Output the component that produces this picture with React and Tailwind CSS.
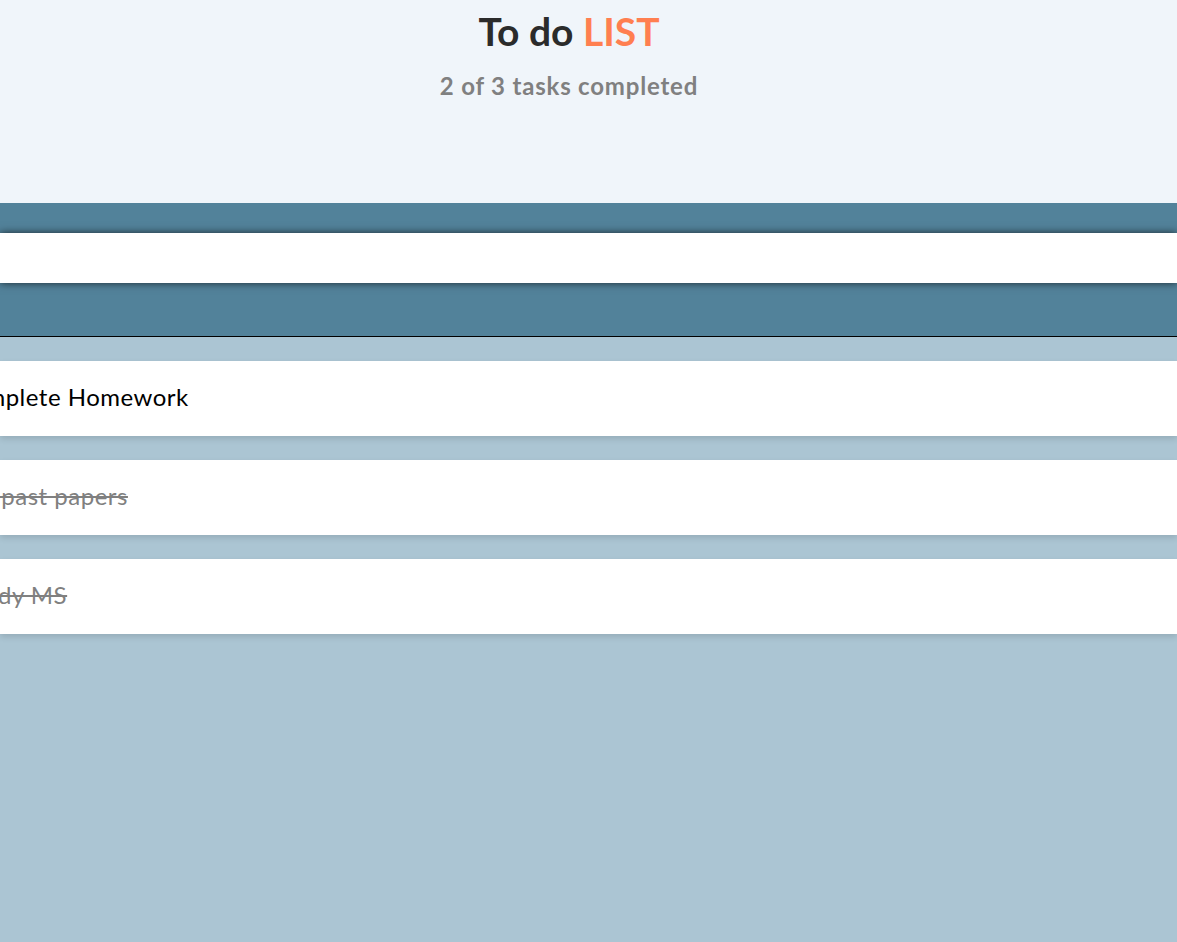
import React from 'react';

const tasks = [
  { text: 'Complete Homework', done: false, shift: 'ml-[-45px]' },
  { text: 'Do past papers', done: true, shift: 'ml-[-38px]' },
  { text: 'Study MS', done: true, shift: 'ml-[-38px]' },
];

const App = () => {
  const completed = tasks.filter((t) => t.done).length;

  return (
    <div className="min-h-screen bg-[#abc5d3] overflow-hidden" style={{ fontFamily: 'Lato, "Open Sans", sans-serif' }}>
      <header className="h-[203px] bg-[#f0f5fa] flex flex-col items-center pr-[39px]">
        <h1 className="mt-[9px] text-[39px] leading-[44px] font-bold text-[#2b2b2b]">
          To do <span className="text-[#ff7f50]">LIST</span>
        </h1>
        <p className="mt-[18px] text-[24px] leading-[30px] font-bold tracking-[0.8px] text-[#808080]">
          {completed} of {tasks.length} tasks completed
        </p>
      </header>

      <div className="h-[30px] bg-[#52829a]" />
      <input
        type="text"
        className="relative z-10 block w-full h-[50px] bg-white px-4 text-[22px] outline-none shadow-[0_0_8px_rgba(0,0,0,0.7)]"
      />
      <div className="h-[54px] bg-[#52829a] border-b border-black" />

      <ul className="flex flex-col gap-[24px] pt-[24px]">
        {tasks.map((task) => (
          <li
            key={task.text}
            className="h-[75px] pb-[4px] bg-white flex items-center shadow-[0_3px_6px_rgba(0,0,0,0.12)]"
          >
            <span
              className={`${task.shift} whitespace-nowrap text-[24px] tracking-[0.5px] ${task.done ? 'line-through text-[#808080]' : 'text-black'}`}
            >
              {task.text}
            </span>
          </li>
        ))}
      </ul>
    </div>
  );
};

export default App;
